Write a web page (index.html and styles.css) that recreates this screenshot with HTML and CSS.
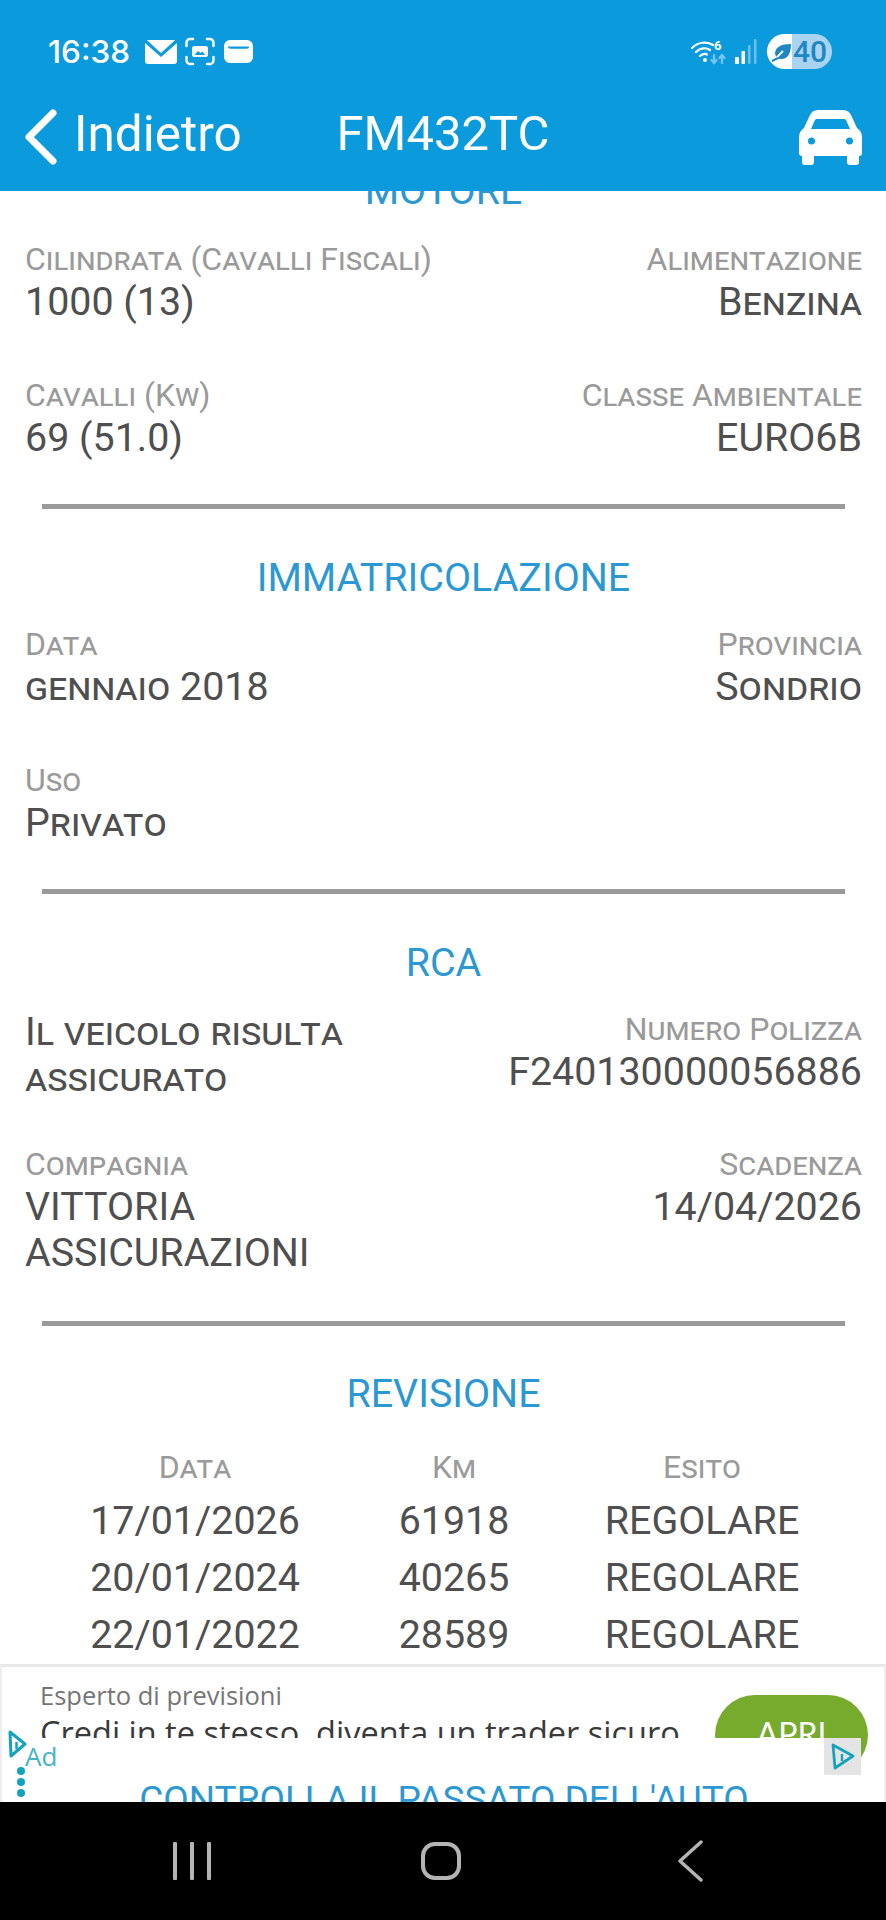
FILE: index.html
```html
<!DOCTYPE html>
<html lang="it">
<head>
    <meta charset="UTF-8">
    <meta name="viewport" content="width=device-width, initial-scale=1.0">
    <title>FM432TC</title>
    <link rel="stylesheet" href="styles.css">
</head>
<body>
    <div class="screen">
        <header class="top">
            <div class="status">
                <div class="status-left">
                    <span class="time">16:38</span>
                    <svg class="ic-mail" viewBox="0 0 32 24"><path d="M3 0h26a3 3 0 0 1 1 .3L16 13 2 .3A3 3 0 0 1 3 0z" fill="#fff"/><path d="M0 3l16 14L32 3v18a3 3 0 0 1-3 3H3a3 3 0 0 1-3-3z" fill="#fff"/></svg>
                    <svg class="ic-scan" viewBox="0 0 30 29" fill="none" stroke="#fff" stroke-width="2.4" stroke-linecap="round"><path d="M8 2H5a3.500 3.500 0 0 0-3.500 3.500V9M22 2h3a3.500 3.500 0 0 1 3.500 3.500V9M8 27H5a3.500 3.500 0 0 1-3.500-3.500V20M22 27h3a3.500 3.500 0 0 0 3.500-3.500V20"/><rect x="7" y="9" width="16" height="11" rx="2.500" fill="#fff" stroke="none"/><path d="M9.500 18l3.500-4 2.500 2 2-1.500 2.500 3.500z" fill="#0b9bdc" stroke="none"/></svg>
                    <svg class="ic-wallet" viewBox="0 0 29 23"><rect width="29" height="23" rx="6" fill="#fff"/><path d="M4 6.500h21c0 1.500-1 2.200-2.500 2.200h-16C5 8.700 4 8 4 6.500z" fill="#0b9bdc"/></svg>
                </div>
                <div class="status-right">
                    <svg class="ic-wifi" viewBox="0 0 36 26" fill="none" stroke="#fff" stroke-width="2.200" stroke-linecap="round"><path d="M1 9c6-6 15-7 21-3M5 13c4-4 10-5 14-2M9 17c2.500-2 5-2.500 7-1.500"/><circle cx="14" cy="21" r="2" fill="#fff" stroke="none"/><text x="23" y="11" class="wifi-six">6</text><path d="M23 16v8M20.500 21l2.500 3 2.500-3" stroke="#7cc4f0"/><path d="M31 24v-8M28.500 19l2.500-3 2.500 3" stroke="#7cc4f0"/></svg>
                    <svg class="ic-signal" viewBox="0 0 22 25"><rect x="0" y="18" width="4" height="7" rx="1" fill="#fff"/><rect x="6.500" y="12" width="3.500" height="13" rx="1" fill="#fff"/><rect x="13" y="6" width="2.500" height="19" rx="1" fill="#6fbdec"/><rect x="19" y="0" width="2.500" height="25" rx="1" fill="#6fbdec"/></svg>
                    <div class="battery">
                        <svg class="ic-leaf" viewBox="0 0 22 22"><path d="M4 13C4 6 10 3 20 3c0 9-3 15-10 15-2 0-3.500-.5-4.500-1.500z" fill="#1f86c4"/><path d="M1 20c3-1 4-2 6-5l5-5" stroke="#fff" stroke-width="1.800" fill="none"/><path d="M1 20l6-3" stroke="#1f86c4" stroke-width="2"/></svg>
                        <span class="battery-num">40</span>
                    </div>
                </div>
            </div>
            <div class="bar">
                <a class="back">
                    <svg class="ic-back" viewBox="0 0 32 56" fill="none" stroke="#fff" stroke-width="7" stroke-linecap="round" stroke-linejoin="round"><path d="M28 4L4 28l24 24"/></svg>
                    <span class="bar-text">Indietro</span>
                </a>
                <div class="plate bar-text">FM432TC</div>
                <svg class="ic-car" viewBox="0 0 63 55"><path d="M19 0h25c4 0 7 2 8.500 6L58 18c3 2 5 5 5 9v16c0 2-1 3-3 3v6c0 2-1 3-3 3h-6c-2 0-3-1-3-3v-6H15v6c0 2-1 3-3 3H6c-2 0-3-1-3-3v-6c-2 0-3-1-3-3V27c0-4 2-7 5-9l5.500-12C12 2 15 0 19 0z" fill="#fff"/><path d="M18 9h27c1 0 2 .6 2.500 2l3.500 8H12l3.500-8C16 9.600 17 9 18 9z" fill="#0b9bdc"/><circle cx="12.500" cy="31" r="3.500" fill="#0b9bdc"/><circle cx="50.500" cy="31" r="3.500" fill="#0b9bdc"/></svg>
            </div>
        </header>

        <main class="content">
            <h2 class="title title-first">MOTORE</h2>
            <div class="fields">
                <div class="field"><div class="label">Cilindrata (Cavalli Fiscali)</div><div class="value">1000 (13)</div></div>
                <div class="field right"><div class="label">Alimentazione</div><div class="value sc">Benzina</div></div>
            </div>
            <div class="fields">
                <div class="field"><div class="label">Cavalli (Kw)</div><div class="value">69 (51.0)</div></div>
                <div class="field right"><div class="label">Classe Ambientale</div><div class="value">EURO6B</div></div>
            </div>
            <hr class="divider">

            <h2 class="title">IMMATRICOLAZIONE</h2>
            <div class="fields">
                <div class="field"><div class="label">Data</div><div class="value sc">gennaio 2018</div></div>
                <div class="field right"><div class="label">Provincia</div><div class="value sc">Sondrio</div></div>
            </div>
            <div class="fields">
                <div class="field"><div class="label">Uso</div><div class="value sc">Privato</div></div>
            </div>
            <hr class="divider">

            <h2 class="title">RCA</h2>
            <div class="fields fields-tight">
                <div class="field narrow"><div class="value sc">Il veicolo risulta assicurato</div></div>
                <div class="field right"><div class="label">Numero Polizza</div><div class="value">F240130000056886</div></div>
            </div>
            <div class="fields">
                <div class="field narrow"><div class="label">Compagnia</div><div class="value">VITTORIA ASSICURAZIONI</div></div>
                <div class="field right"><div class="label">Scadenza</div><div class="value">14/04/2026</div></div>
            </div>
            <hr class="divider divider-low">

            <h2 class="title title-rev">REVISIONE</h2>
            <div class="rev">
                <div class="label">Data</div><div class="label">Km</div><div class="label">Esito</div>
                <div class="value">17/01/2026</div><div class="value">61918</div><div class="value">REGOLARE</div>
                <div class="value">20/01/2024</div><div class="value">40265</div><div class="value">REGOLARE</div>
                <div class="value">22/01/2022</div><div class="value">28589</div><div class="value">REGOLARE</div>
            </div>
        </main>

        <aside class="ad">
            <div class="ad-text">
                <div class="ad-kicker">Esperto di previsioni</div>
                <div class="ad-head">Credi in te stesso, diventa un trader sicuro</div>
            </div>
            <div class="ad-btn">APRI</div>
            <div class="ad-strip">CONTROLLA IL PASSATO DELL'AUTO</div>
            <svg class="ad-mark" viewBox="0 0 20 30" fill="none" stroke="#14a3bd" stroke-width="3" stroke-linejoin="round"><path d="M3 2l15 12L4 26z"/><path d="M9.500 12v7" stroke-width="2.500"/></svg>
            <span class="ad-label">Ad</span>
            <div class="ad-dots"><i></i><i></i><i></i></div>
            <div class="ad-choice">
                <svg viewBox="0 0 26 28" fill="none" stroke="#14a3bd" stroke-width="2.800" stroke-linejoin="round"><path d="M3 2l20 11L5 25z"/><path d="M12 11v7" stroke-width="2.400"/></svg>
            </div>
        </aside>

        <nav class="softkeys">
            <div class="key-recent"><i></i><i></i><i></i></div>
            <div class="key-home"></div>
            <svg class="key-back" viewBox="0 0 26 42" fill="none" stroke="#b4b4b4" stroke-width="3.500" stroke-linecap="round" stroke-linejoin="round"><path d="M24 2L3 21l21 19"/></svg>
        </nav>
    </div>
</body>
</html>
```

FILE: styles.css
```css
* { box-sizing: border-box; }
html, body { margin: 0; padding: 0; }
body {
    font-family: Roboto, "Liberation Sans", sans-serif;
    background-color: #fff;
    color: #4f4f4f;
}
.screen {
    width: 886px;
    height: 1920px;
    display: flex;
    flex-direction: column;
    overflow: hidden;
}

/* barra superiore */
.top {
    height: 191px;
    flex: none;
    background: #0b9bdc;
    color: #fff;
    padding: 34px 25px 0 25px;
}
.status {
    height: 35px;
    display: flex;
    justify-content: space-between;
    align-items: center;
    padding: 0 29px 0 23px;
}
.status-left, .status-right { display: flex; align-items: center; }
.time {
    font-family: Inter, Roboto, sans-serif;
    font-size: 31.500px;
    font-weight: 500;
    margin-right: 15px;
}
.ic-mail { width: 32px; height: 24px; margin-right: 8px; }
.ic-scan { width: 30px; height: 29px; margin-right: 9px; }
.ic-wallet { width: 29px; height: 23px; }
.ic-wifi { width: 36px; height: 26px; margin-right: 8px; }
.wifi-six { font-size: 13px; font-weight: 700; fill: #fff; stroke: none; }
.ic-signal { width: 22px; height: 25px; margin-right: 10px; }
.battery {
    width: 65px;
    height: 35px;
    border-radius: 18px;
    background: linear-gradient(90deg, #fff 0, #fff 25px, #a8d4f2 25px);
    display: flex;
    align-items: center;
    padding-left: 4px;
}
.ic-leaf { width: 22px; height: 22px; }
.battery-num {
    font-size: 30px;
    font-weight: 500;
    color: #1f86c4;
    line-height: 35px;
}
.bar {
    display: grid;
    grid-template-columns: 1fr auto 1fr;
    grid-template-rows: 56px;
    align-items: center;
    margin-top: 40px;
    height: 56px;
}
.back { display: flex; align-items: center; font-size: 49.500px; }
.bar-text { line-height: 50px; padding-bottom: 6px; }
.ic-back { width: 32px; height: 56px; margin-right: 17px; }
.plate { font-size: 49px; }
.ic-car { width: 63px; height: 55px; justify-self: end; margin-right: -1px; }

/* contenuto */
.content {
    flex: 1;
    min-height: 0;
    overflow: hidden;
    padding: 0 24px 0 25px;
}
.title {
    margin: 0 0 23px 0;
    font-size: 39.400px;
    line-height: 46px;
    font-weight: 400;
    text-align: center;
    color: #2b98d4;
}
.title-first { margin: -23px 0 25px 0; }
.title-rev { margin-bottom: 25px; }
.fields {
    display: flex;
    justify-content: space-between;
    margin-bottom: 50px;
}
.fields-tight { margin-bottom: 43px; }
.field.right { text-align: right; }
.field.narrow { width: 340px; }
.label {
    font-size: 32px;
    line-height: 40px;
    font-variant: small-caps;
    color: #9a9a9a;
}
.value {
    font-size: 39.400px;
    line-height: 46px;
    color: #4f4f4f;
}
.sc { font-variant: small-caps; }
.divider {
    height: 5px;
    margin: -7px 17px 46px 17px;
    border: none;
    background: #9a9a9a;
}
.divider-low { margin-top: -5px; margin-bottom: 45px; }
.rev {
    display: grid;
    grid-template-columns: 258px 260px 236px;
    grid-template-rows: 50px repeat(3, 57px);
    padding-left: 41px;
    text-align: center;
    align-items: center;
}

/* banner pubblicitario */
.ad {
    position: relative;
    height: 138px;
    flex: none;
    background: #fff;
    border-top: 3px solid #e8e8e8;
    border-left: 2px solid #eee;
    border-right: 2px solid #eee;
    font-family: "Open Sans", sans-serif;
}
.ad-text { padding: 12px 0 0 38px; }
.ad-kicker { font-size: 25.500px; line-height: 32px; color: #757575; }
.ad-head { font-size: 32.500px; line-height: 44px; color: #3a3a3a; white-space: nowrap; }
.ad-btn {
    position: absolute;
    left: 713px;
    top: 28px;
    width: 153px;
    height: 80px;
    border-radius: 40px;
    background: #76ab2e;
    color: #fff;
    text-align: center;
    font-family: Lato, sans-serif;
    font-size: 32px;
    line-height: 78px;
}
.ad-strip {
    position: absolute;
    left: 0;
    top: 71px;
    width: 822px;
    height: 64px;
    background: #fff;
    padding: 39px 0 0 62px;
    text-align: center;
    font-family: Roboto, sans-serif;
    font-size: 37px;
    line-height: 46px;
    color: #2b98d4;
    overflow: hidden;
    white-space: nowrap;
}
.ad-mark { position: absolute; left: 5px; top: 63px; width: 20px; height: 30px; }
.ad-label {
    position: absolute;
    left: 23px;
    top: 74px;
    font-size: 26px;
    line-height: 30px;
    color: #45b4c4;
}
.ad-dots {
    position: absolute;
    left: 15px;
    top: 100px;
    display: flex;
    flex-direction: column;
    gap: 3px;
}
.ad-dots i { width: 8px; height: 8px; border-radius: 50%; background: #14a3bd; }
.ad-choice {
    position: absolute;
    left: 822px;
    top: 71px;
    width: 37px;
    height: 37px;
    background: #e4e4e4;
    display: flex;
    align-items: center;
    justify-content: center;
}
.ad-choice svg { width: 26px; height: 28px; }

/* tasti android */
.softkeys {
    height: 118px;
    flex: none;
    background: #000;
    display: grid;
    grid-template-columns: 350px 141px 1fr;
    padding: 40px 0 0 0;
    align-items: start;
}
.key-recent { display: flex; gap: 13px; justify-content: flex-end; width: 211px; }
.key-recent i { width: 4px; height: 38px; background: #b4b4b4; border-radius: 1px; }
.key-home {
    width: 40px;
    height: 38px;
    margin-left: 71px;
    border: 4px solid #b4b4b4;
    border-radius: 14px;
}
.key-back { width: 26px; height: 42px; margin-left: 186px; margin-top: -2px; }
```
